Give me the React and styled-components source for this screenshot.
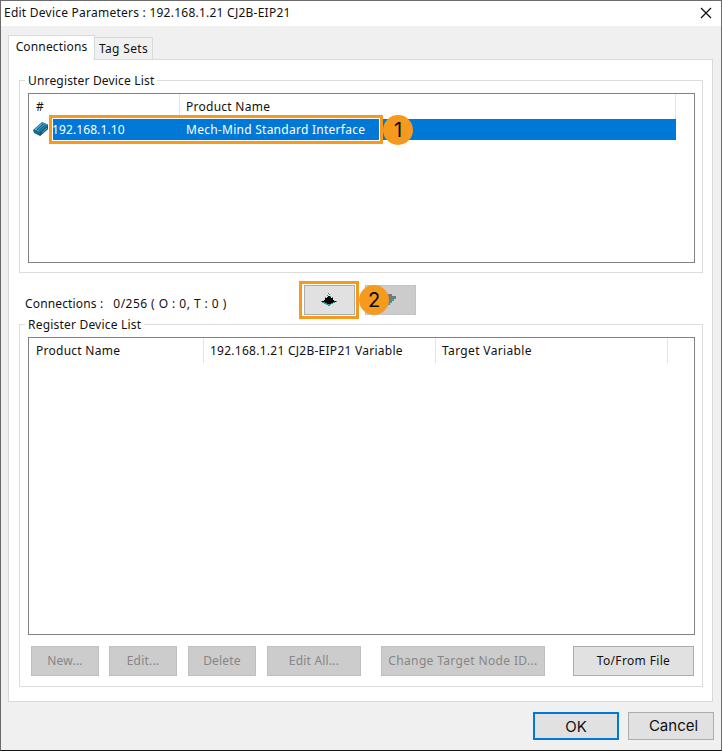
import React from 'react';
import styled, { createGlobalStyle } from 'styled-components';

const App = () => (
  <>
    <GlobalStyle />
    <Window>
      <TitleBar>
        <Text $track={0.01}>Edit Device Parameters : 192.168.1.21 CJ2B-EIP21</Text>
        <CloseIcon viewBox='0 0 12 12'>
          <path d='M1 1L11 11M11 1L1 11' stroke='#111' strokeWidth='1.3' />
        </CloseIcon>
      </TitleBar>
      <Tabs>
        <Tab $active>
          <Text $track={0.15}>Connections</Text>
        </Tab>
        <Tab>
          <Text $track={0.35}>Tag Sets</Text>
        </Tab>
      </Tabs>
      <Panel>
        <Group $height={193}>
          <Legend>
            <Text $track={0.17}>Unregister Device List</Text>
          </Legend>
          <List $height={170}>
            <HeaderRow>
              <HeaderCell $width={151}>#</HeaderCell>
              <HeaderCell $width={496}>
                <Text>Product Name</Text>
              </HeaderCell>
            </HeaderRow>
            <DeviceRow>
              <DeviceIcon />
              <Selection>
                <AddressCell>192.168.1.10</AddressCell>
                <Text>Mech-Mind Standard Interface</Text>
                <Highlight $left={-2} $top={-4} $width={334} $height={29}>
                  <Badge $top={-3}>1</Badge>
                </Highlight>
              </Selection>
            </DeviceRow>
          </List>
        </Group>
        <Transfer>
          <Count>
            <Text $track={0.15}>Connections :</Text>
            <Text $track={0.45}>0/256 ( O : 0, T : 0 )</Text>
          </Count>
          <ArrowButton>
            <ArrowIcon />
            <Highlight $left={-6} $top={-5} $width={60} $height={38}>
              <Badge $top={1}>2</Badge>
            </Highlight>
          </ArrowButton>
          <ArrowButton $disabled>
            <ArrowIcon down />
          </ArrowButton>
        </Transfer>
        <Group $height={363}>
          <Legend>
            <Text $track={0.2}>Register Device List</Text>
          </Legend>
          <List $height={298}>
            <HeaderRow>
              <HeaderCell $width={175}>
                <Text>Product Name</Text>
              </HeaderCell>
              <HeaderCell $width={232}>
                <Text>192.168.1.21 CJ2B-EIP21 Variable</Text>
              </HeaderCell>
              <HeaderCell $width={232}>
                <Text $track={0.35}>Target Variable</Text>
              </HeaderCell>
            </HeaderRow>
          </List>
          <Actions>
            <Button $width={68} $disabled>New...</Button>
            <Button $width={68} $before={10} $disabled>Edit...</Button>
            <Button $width={68} $before={11} $disabled>Delete</Button>
            <Button $width={94} $before={11} $disabled>Edit All...</Button>
            <Button $width={164} $before={20} $disabled>
              <Text $track={0.35}>Change Target Node ID...</Text>
            </Button>
            <Button $width={121} $before={28}>
              <Text $track={0.35}>To/From File</Text>
            </Button>
          </Actions>
        </Group>
      </Panel>
      <Footer>
        <DialogButton $primary>OK</DialogButton>
        <DialogButton>Cancel</DialogButton>
      </Footer>
    </Window>
  </>
);

const DeviceIcon = () => (
  <Device viewBox='0 0 16 16'>
    <path d='M0 9L9 1L15 3.5V8L7 15L1 12Z' fill='#17698f' />
    <path d='M1 8.5L9 1.5L14.5 3.8L6.5 11Z' fill='#3497c1' />
    <path d='M6.5 11L15 4V8L7 15Z' fill='#15597c' />
    <path d='M4 8.5L10 3M6 9.5L12.5 4' stroke='#123e5d' strokeWidth='0.9' />
    <path d='M2 9L9 3M9 11.5L14 7' stroke='#78bfd8' strokeWidth='0.8' />
  </Device>
);

const ArrowIcon = ({ down }) =>
  down ? (
    <Arrow viewBox='0 0 16 14' shapeRendering='crispEdges'>
      <path d='M2 2H6V1H10V3H14V5H12V7H10V9H8V11H6V8H4V6H2Z' fill='#777' />
      <path d='M12 5H14V6H12V8H10V10H8V12H6V10H8V8H10V6H12Z' fill='#3f9a9a' />
    </Arrow>
  ) : (
    <Arrow viewBox='0 0 16 14' shapeRendering='crispEdges'>
      <path d='M0 8H3V9H13V8H16V9H14V10H12V11H10V12H9V13H7V12H5V11H3V10H1V9H0Z' fill='#359a98' />
      <path d='M7 3H9V4H10V5H12V7H13V8H15V9H12V10H10V11H6V10H4V9H1V8H3V7H4V5H6V4H7Z' fill='#080808' />
      <path d='M7 0H8V1H7ZM8 1H9V2H8ZM6 2H7V3H6ZM9 3H10V4H9ZM4 4H5V5H4ZM11 4H12V5H11Z' fill='#359a98' />
    </Arrow>
  );

const GlobalStyle = createGlobalStyle`
  * {
    box-sizing: border-box;
  }

  body {
    margin: 0;
    font-family: 'Noto Sans', 'Open Sans', sans-serif;
    font-size: 12px;
    line-height: 16px;
    color: #111;
  }
`;

const Window = styled.div`
  width: 722px;
  height: 751px;
  display: flex;
  flex-direction: column;
  background: #f0f0f0;
  border: 1px solid #6b6b6b;
  border-bottom-color: #151515;
`;

const Text = styled.span`
  white-space: nowrap;
  letter-spacing: ${(props) => props.$track ?? 0.26}px;
`;

const TitleBar = styled.header`
  height: 25px;
  flex: none;
  display: flex;
  align-items: center;
  justify-content: space-between;
  padding: 0 9px 1px 3px;
  background: #fff;

  ${Text} {
    letter-spacing: 0.24px;
  }
`;

const CloseIcon = styled.svg`
  width: 12px;
  height: 12px;
`;

const Tabs = styled.nav`
  height: 33px;
  flex: none;
  display: flex;
  align-items: flex-end;
  padding-left: 7px;
`;

const Tab = styled.div`
  width: ${(props) => (props.$active ? 87 : 58)}px;
  height: ${(props) => (props.$active ? 25 : 22)}px;
  padding-top: 3px;
  text-align: center;
  background: ${(props) => (props.$active ? '#fff' : '#f0f0f0')};
  border: 1px solid #d9d9d9;
  border-bottom: 0;
  border-left-width: ${(props) => (props.$active ? 1 : 0)}px;
  margin-bottom: ${(props) => (props.$active ? -1 : 0)}px;
  z-index: ${(props) => (props.$active ? 1 : 0)};
`;

const Panel = styled.main`
  width: 705px;
  height: 643px;
  flex: none;
  margin-left: 7px;
  padding: 20px 9px 0 10px;
  background: #fff;
  border: 1px solid #d9d9d9;
`;

const Group = styled.section`
  height: ${(props) => props.$height}px;
  border: 1px solid #dcdcdc;
  padding: 0 7px 0 8px;
`;

const Legend = styled.h2`
  width: fit-content;
  height: 16px;
  margin: -8px 0 4px -3px;
  padding: 0 3px;
  font-size: 12px;
  font-weight: 400;
  background: #fff;
`;

const List = styled.div`
  height: ${(props) => props.$height}px;
  border: 1px solid #828282;
`;

const HeaderRow = styled.div`
  display: flex;
  height: 25px;
`;

const HeaderCell = styled.div`
  width: ${(props) => props.$width}px;
  padding: 5px 0 0 6px;
  border-right: 1px solid #e3e3e3;

  &:first-child {
    padding-left: 7px;
  }
`;

const DeviceRow = styled.div`
  display: flex;
  height: 21px;
  padding-left: 4px;
`;

const Device = styled.svg`
  width: 16px;
  height: 16px;
  margin-top: 2px;
`;

const Selection = styled.div`
  position: relative;
  display: flex;
  width: 625px;
  height: 21px;
  margin-left: 2px;
  padding: 3px 0 0 1px;
  color: #fff;
  background: #0078d7;
`;

const AddressCell = styled.span`
  width: 134px;
  letter-spacing: 0.1px;
`;

/* Orange frame drawn over the part that a numbered step refers to */
const Highlight = styled.div`
  position: absolute;
  left: ${(props) => props.$left}px;
  top: ${(props) => props.$top}px;
  width: ${(props) => props.$width}px;
  height: ${(props) => props.$height}px;
  border: 3px solid #f59a1e;
  box-shadow: inset 0 0 0 1px #fff;
`;

const Badge = styled.span`
  position: absolute;
  left: 100%;
  top: ${(props) => props.$top}px;
  width: 30px;
  height: 30px;
  margin-left: 3px;
  z-index: 2;
  border-radius: 50%;
  color: #080808;
  background: #f59a1e;
  font: 20px/30px Inter, sans-serif;
  text-align: center;
`;

const Transfer = styled.div`
  display: flex;
  height: 51px;
  padding: 12px 0 0 6px;
`;

const Count = styled.div`
  width: 279px;
  padding-top: 11px;
  display: flex;
  gap: 10px;
`;

const ArrowButton = styled.div`
  position: relative;
  width: 51px;
  height: 30px;
  margin-right: 10px;
  display: grid;
  place-items: center;
  padding-right: 1px;
  background: ${(props) => (props.$disabled ? '#ccc' : '#e1e1e1')};
  border: 1px solid ${(props) => (props.$disabled ? '#c3c3c3' : '#adadad')};
  z-index: ${(props) => (props.$disabled ? 0 : 1)};
`;

const Arrow = styled.svg`
  width: 16px;
  height: 14px;
`;

const Actions = styled.div`
  display: flex;
  padding: 11px 0 0 3px;
`;

const Button = styled.button`
  width: ${(props) => props.$width}px;
  height: 30px;
  flex: none;
  margin: 0 0 0 ${(props) => props.$before || 0}px;
  padding: 0 0 1px;
  font: inherit;
  letter-spacing: 0.2px;
  white-space: nowrap;
  color: ${(props) => (props.$disabled ? '#868686' : '#111')};
  background: ${(props) => (props.$disabled ? '#ccc' : '#e1e1e1')};
  border: 1px solid ${(props) => (props.$disabled ? '#bfbfbf' : '#adadad')};
`;

const Footer = styled.footer`
  display: flex;
  justify-content: flex-end;
  gap: 9px;
  padding: 10px 7px 0 0;
`;

const DialogButton = styled.button`
  width: 86px;
  height: 28px;
  padding: ${(props) => (props.$primary ? '1px 0 0' : '0 0 0 5px')};
  font: 15px/20px Inter, sans-serif;
  color: #111;
  background: #e1e1e1;
  border: ${(props) => (props.$primary ? '2px solid #0078d7' : '1px solid #adadad')};
`;

export default App;
